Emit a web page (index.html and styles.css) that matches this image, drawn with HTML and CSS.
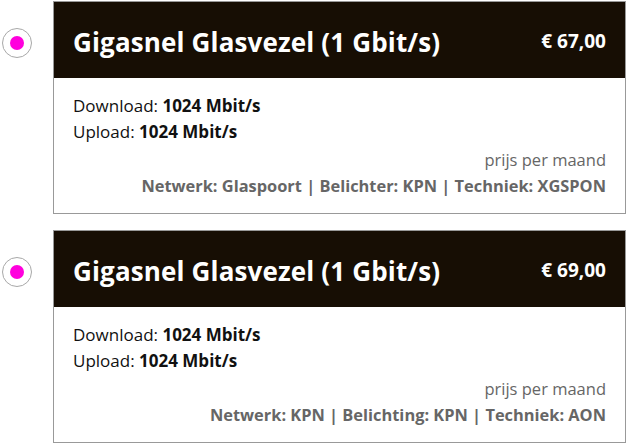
FILE: index.html
```html
<!DOCTYPE html>
<html>
<head>
<meta charset="utf-8">
<link rel="stylesheet" href="styles.css">
</head>
<body>
<div class="list">
  <div class="option">
    <div class="radio"><span class="dot"></span></div>
    <div class="card">
      <div class="head">
        <span class="title">Gigasnel Glasvezel (1 Gbit/s)</span>
        <span class="price">€ 67,00</span>
      </div>
      <div class="body">
        <div class="line">Download: <b>1024 Mbit/s</b></div>
        <div class="line">Upload: <b>1024 Mbit/s</b></div>
        <div class="per">prijs per maand</div>
        <div class="meta">Netwerk: Glaspoort | Belichter: KPN | Techniek: XGSPON</div>
      </div>
    </div>
  </div>
  <div class="option">
    <div class="radio"><span class="dot"></span></div>
    <div class="card">
      <div class="head">
        <span class="title">Gigasnel Glasvezel (1 Gbit/s)</span>
        <span class="price">€ 69,00</span>
      </div>
      <div class="body">
        <div class="line">Download: <b>1024 Mbit/s</b></div>
        <div class="line">Upload: <b>1024 Mbit/s</b></div>
        <div class="per">prijs per maand</div>
        <div class="meta">Netwerk: KPN | Belichting: KPN | Techniek: AON</div>
      </div>
    </div>
  </div>
</div>
</body>
</html>
```
FILE: styles.css
```css
html, body {
  margin: 0;
  padding: 0;
  background: #fff;
}
body {
  font-family: "Open Sans", "Noto Sans", sans-serif;
  color: #111;
}
.list {
  display: flex;
  flex-direction: column;
  gap: 16px;
  padding-top: 1px;
  width: 626px;
}
.option {
  display: flex;
  align-items: flex-start;
}
.radio {
  width: 30px;
  height: 30px;
  margin: 27px 0 0 2px;
  border: 1px solid #a8a8a8;
  border-radius: 50%;
  box-sizing: border-box;
  display: flex;
  align-items: center;
  justify-content: center;
  flex: none;
}
.dot {
  width: 14px;
  height: 14px;
  border-radius: 50%;
  background: #f0d;
}
.card {
  margin-left: 21px;
  flex: 1;
  border: 1px solid #999;
}
.head {
  background: #170e04;
  color: #fff;
  height: 76px;
  display: flex;
  align-items: center;
  justify-content: space-between;
  padding: 0 19px 0 19px;
}
.title {
  font-size: 26px;
  letter-spacing: 0.15px;
  font-weight: 700;
  margin-top: 3px;
}
.price {
  font-size: 19px;
  font-weight: 700;
  margin-top: 2px;
}
.body {
  padding: 15px 19px 14px 19px;
}
.line {
  font-size: 17px;
  line-height: 26px;
}
.line b {
  font-weight: 700;
}
.per {
  margin-top: 2px;
  text-align: right;
  color: #666;
  font-size: 16.5px;
  line-height: 26px;
}
.meta {
  text-align: right;
  color: #666;
  font-weight: 700;
  font-size: 16.4px;
  line-height: 26px;
}
```
